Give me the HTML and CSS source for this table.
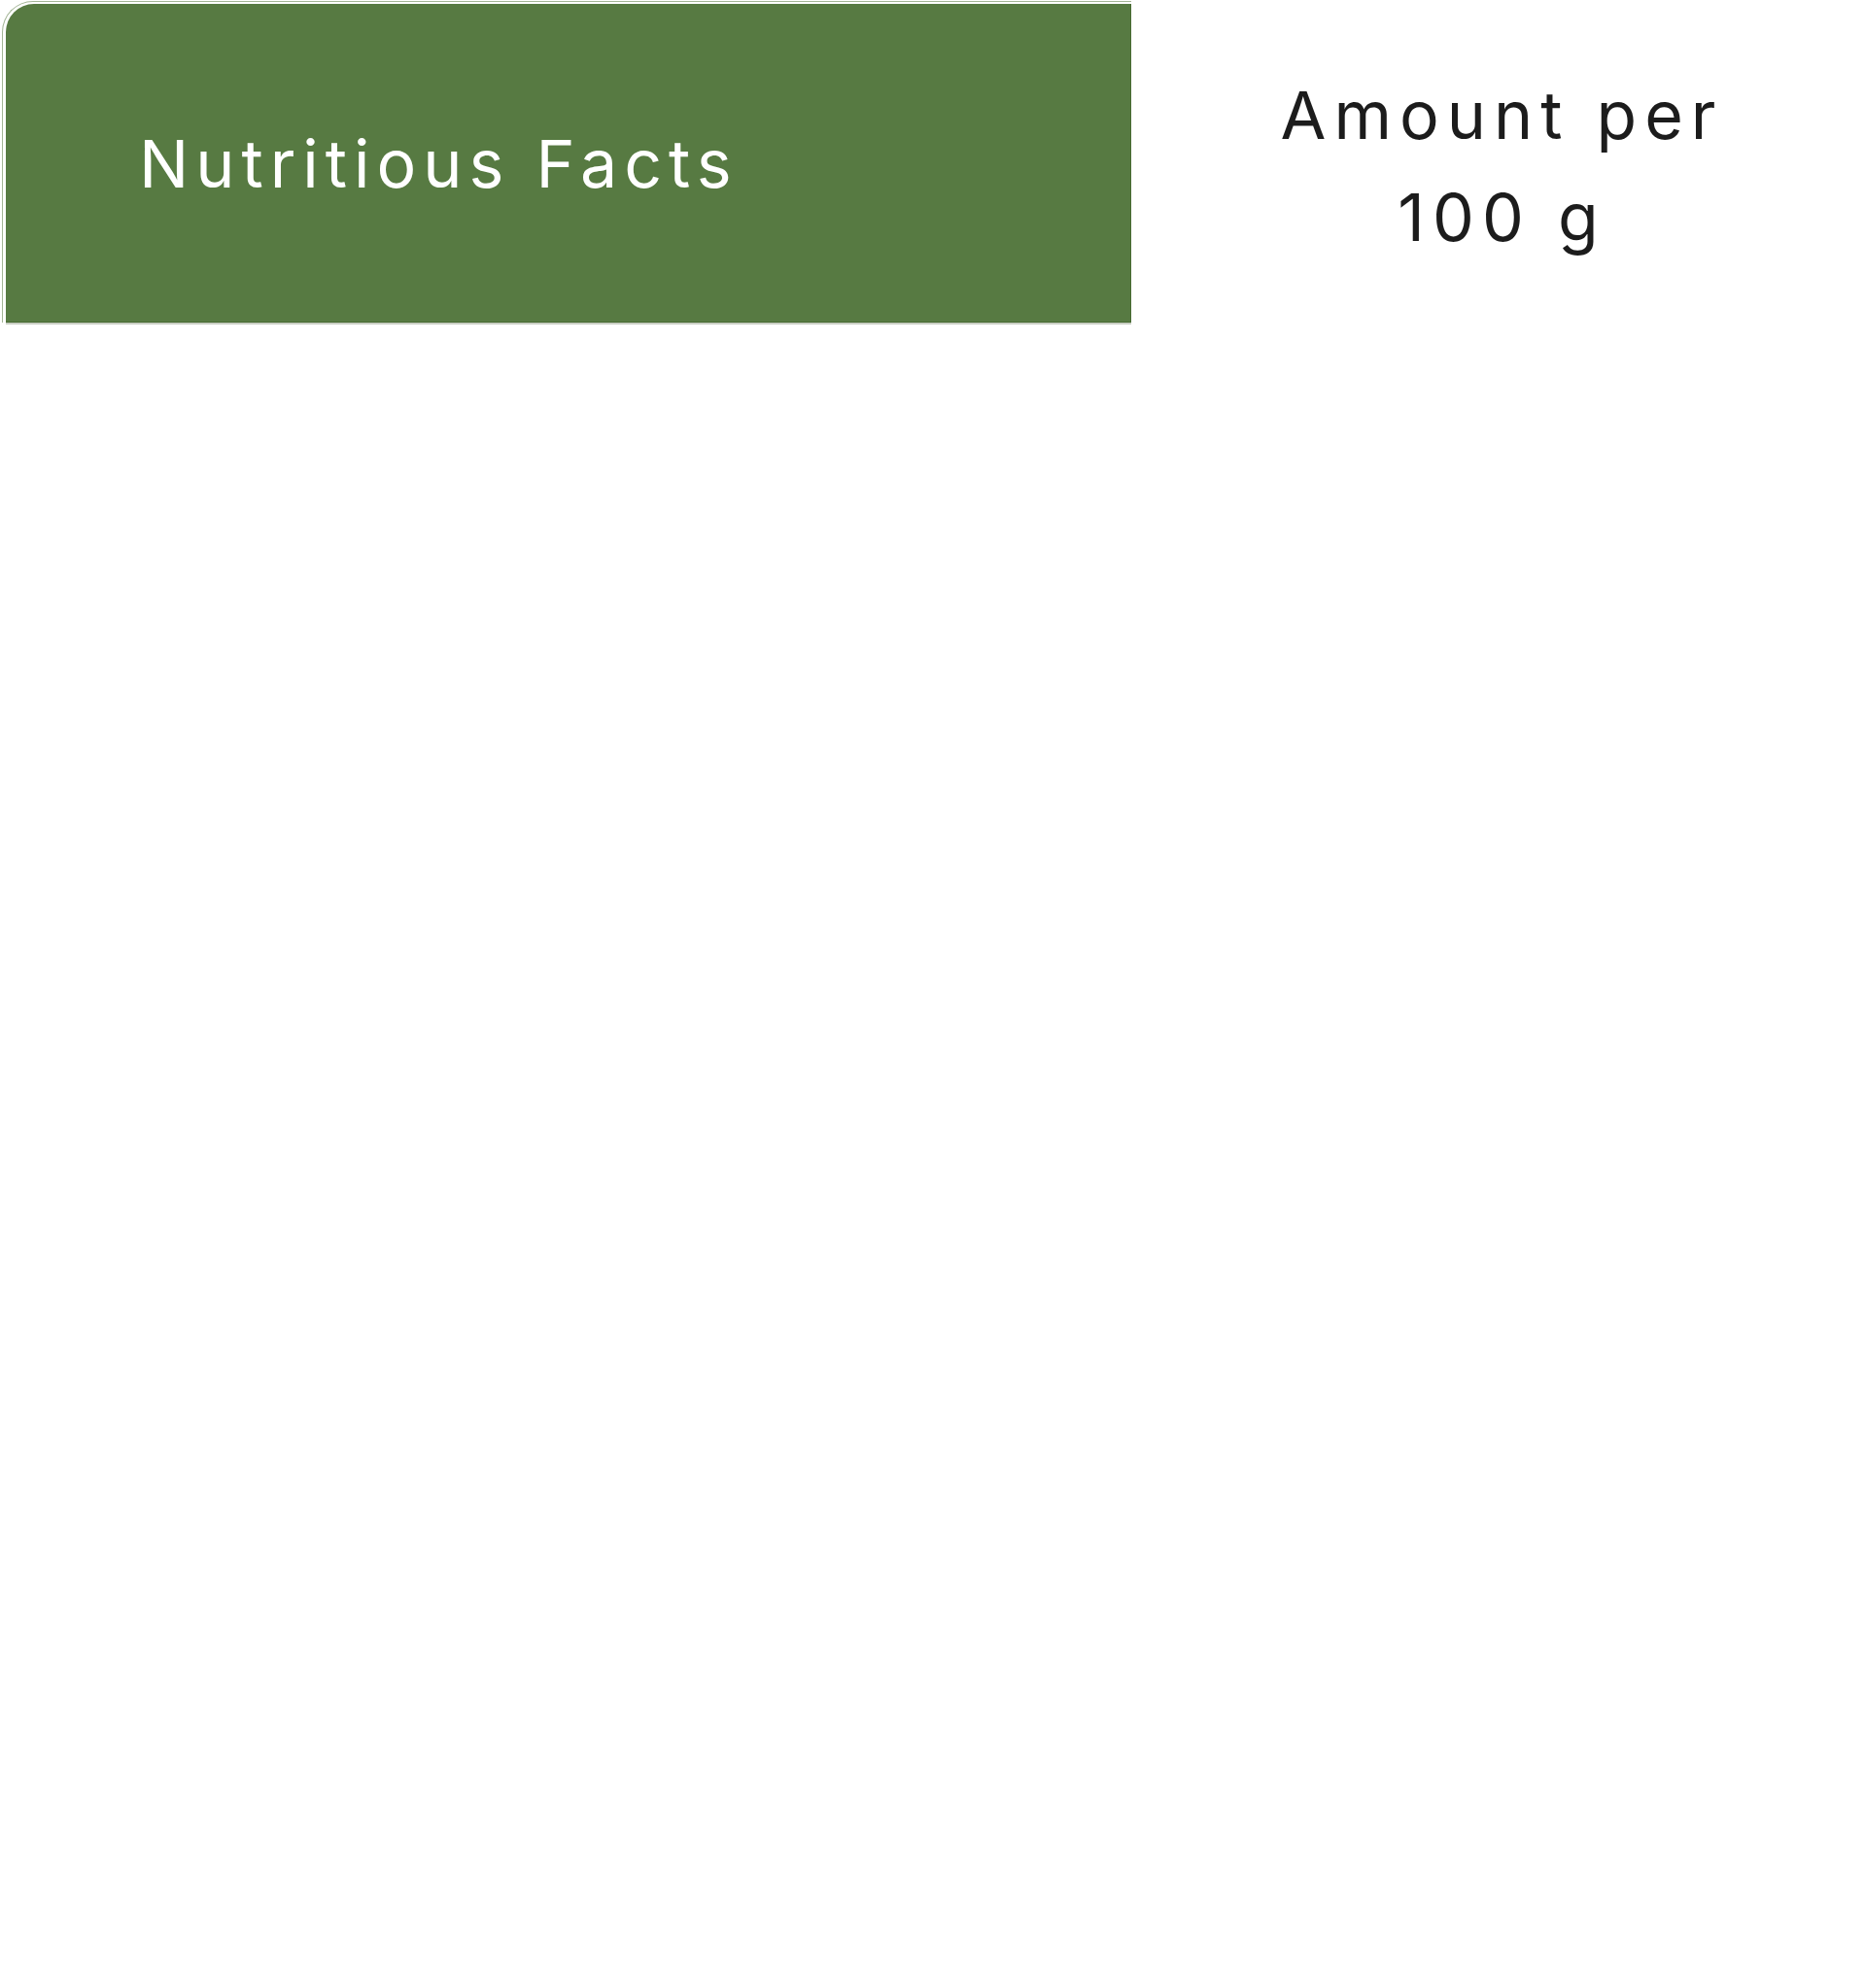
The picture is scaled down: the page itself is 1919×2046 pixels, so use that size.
FILE: index.html
```html
<!DOCTYPE html>
<html lang="en">
<head>
<meta charset="utf-8">
<title>Nutritious Facts</title>
<link rel="stylesheet" href="styles.css">
</head>
<body>
<header class="facts-header">
  <div class="title-card">
    <div class="title-face">
      <h2 class="title-text">Nutritious Facts</h2>
    </div>
  </div>
  <div class="amount">
    <p class="amount-text">Amount per<br>100 g</p>
  </div>
</header>
</body>
</html>
```
FILE: styles.css
```css
html, body {
  margin: 0;
  padding: 0;
  background: #ffffff;
}

body {
  width: 1919px;
  height: 2046px;
  font-family: "Inter", "Open Sans", sans-serif;
}

.facts-header {
  display: flex;
  align-items: stretch;
}

.title-card {
  width: 1158px;
  margin: 1px 0 0 2px;
  padding: 2px 0 0 3px;
  border-left: 1px solid #a3b596;
  border-top: 1px solid #a3b596;
  border-top-left-radius: 32px;
  background: #ffffff;
}

.title-face {
  display: flex;
  align-items: center;
  height: 327px;
  padding-left: 137px;
  background: #577a42;
  border-right: 1px solid #476a32;
  border-bottom: 1px solid #476a32;
  border-top-left-radius: 29px;
  box-shadow: 0 2px 0 0 #c9cec3;
}

.title-text {
  margin: 0;
  color: #ffffff;
  font-size: 68px;
  font-weight: 400;
  letter-spacing: 7px;
  line-height: 1;
}

.amount {
  flex: 1;
  display: flex;
  align-items: center;
  justify-content: center;
  padding-top: 9px;
  padding-left: 8px;
}

.amount-text {
  margin: 0;
  text-align: center;
  color: #1c1c1c;
  font-size: 68px;
  font-weight: 400;
  letter-spacing: 8px;
  line-height: 105px;
}
```
